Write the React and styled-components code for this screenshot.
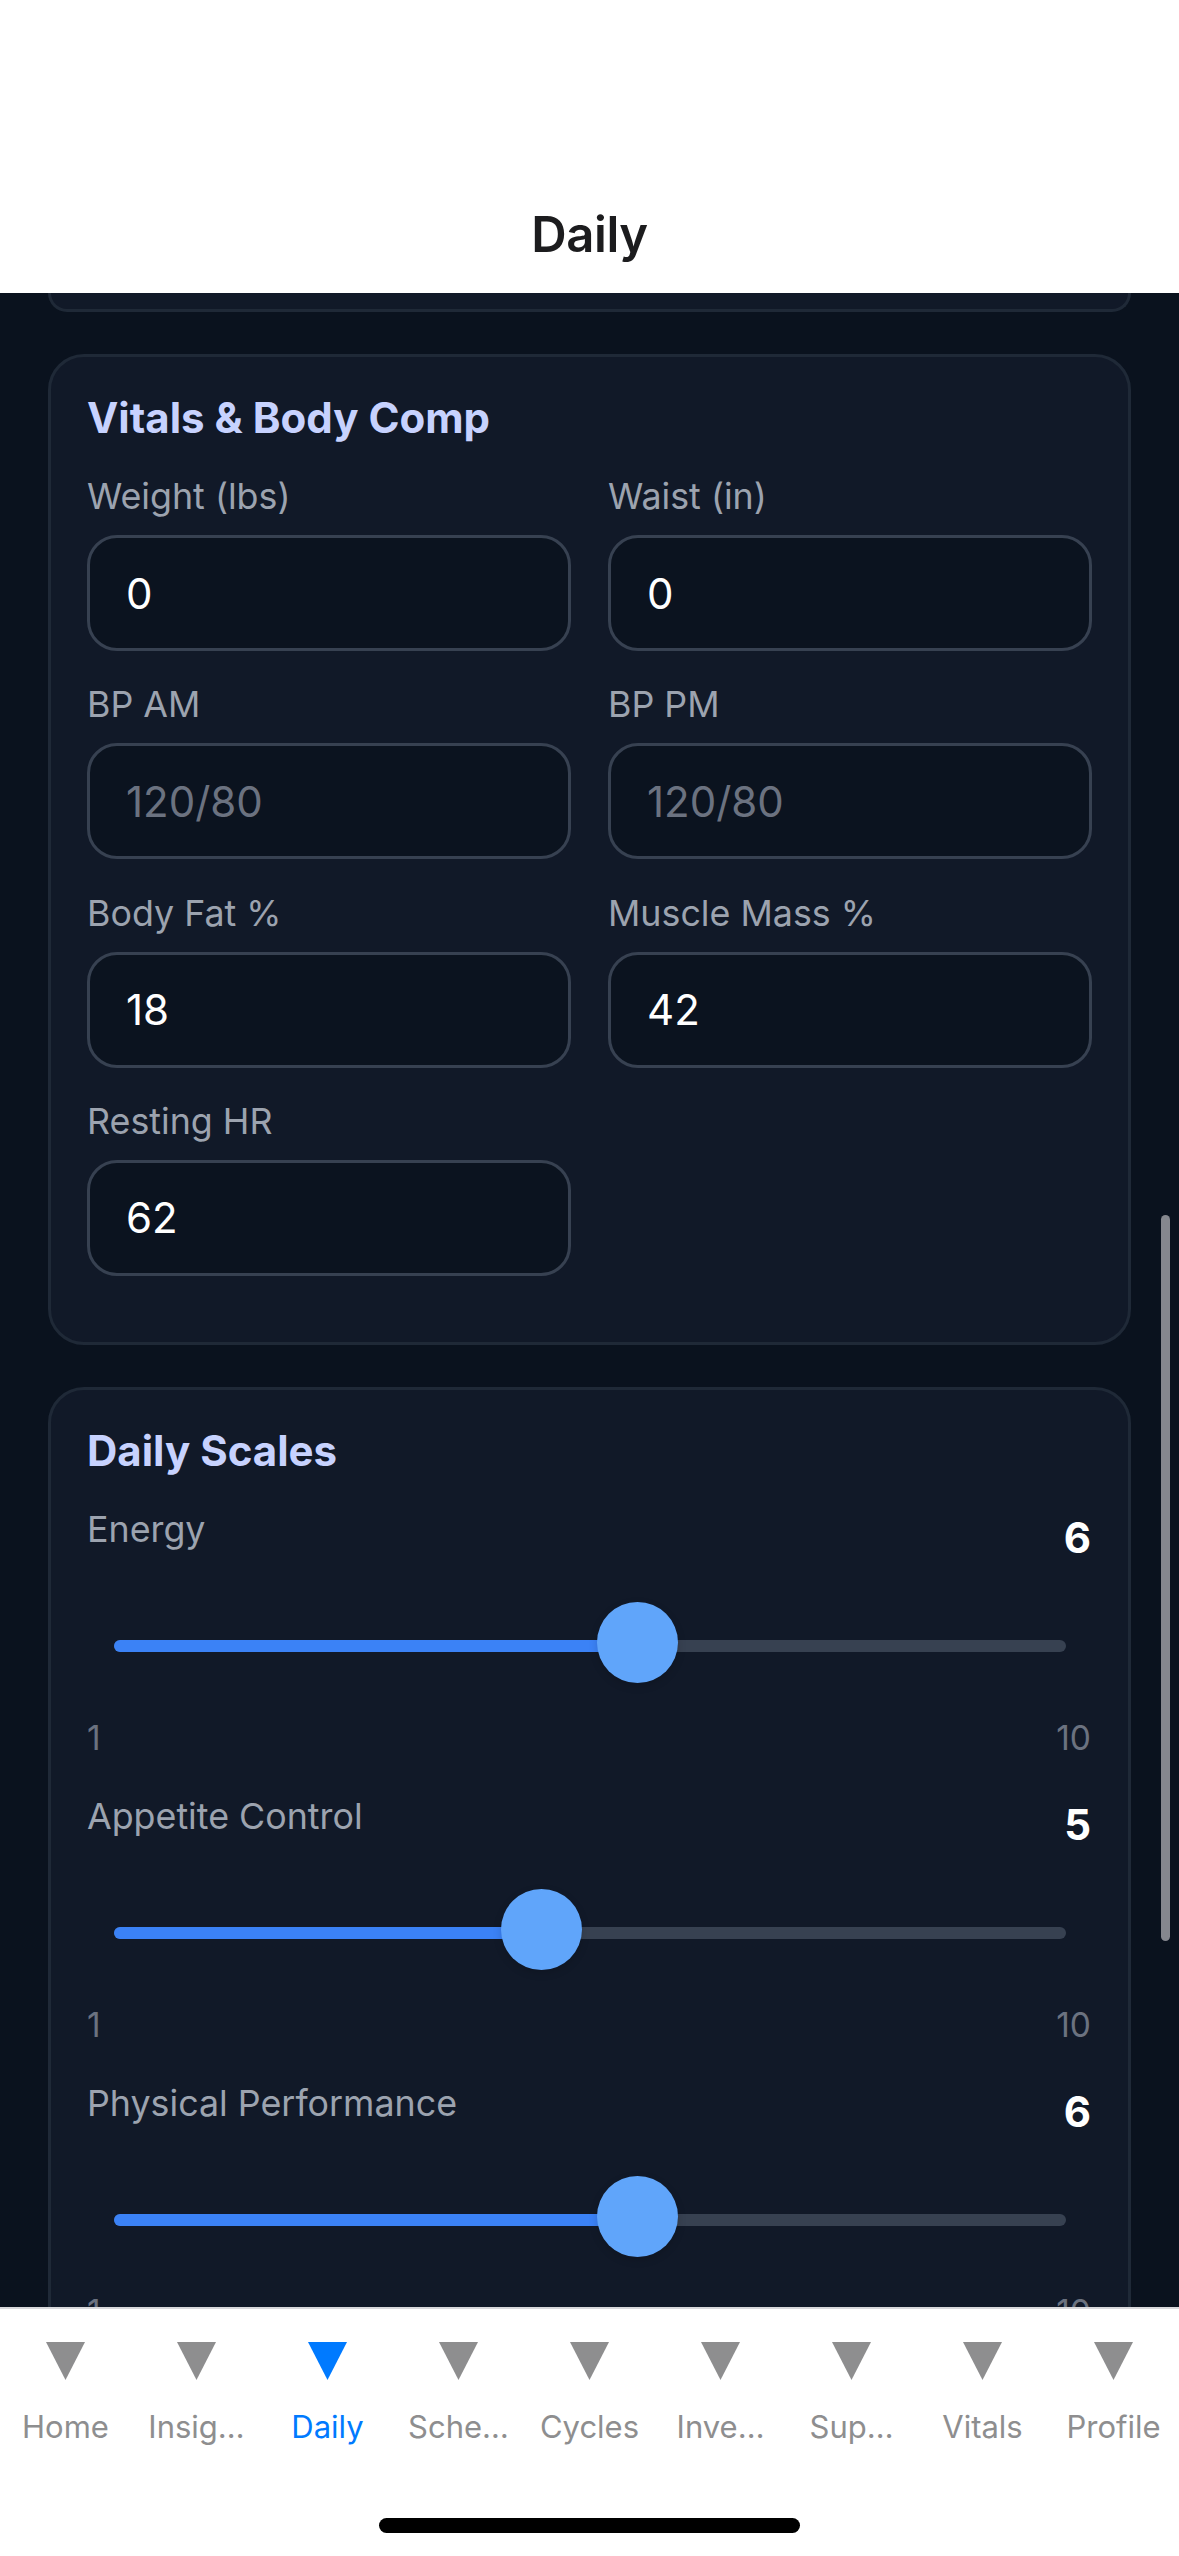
import React from "react";
import styled, { createGlobalStyle } from "styled-components";

const Global = createGlobalStyle`
  html, body { margin: 0; padding: 0; background: #fff; }
  * { box-sizing: border-box; }
  body { font-family: Inter, "Noto Sans", "Liberation Sans", sans-serif; }
`;

const Screen = styled.div`
  width: 1179px;
  height: 2556px;
  display: flex;
  flex-direction: column;
  overflow: hidden;
  position: relative;
`;

const Header = styled.header`
  flex: 0 0 293px;
  background: #fff;
  display: flex;
  align-items: flex-end;
  justify-content: center;
  padding-bottom: 28px;
`;

const HeaderTitle = styled.h1`
  margin: 0;
  font-size: 49px;
  line-height: 60px;
  font-weight: 600;
  letter-spacing: -0.4px;
  color: #1c1c1e;
`;

const Scroll = styled.main`
  flex: 1 1 0;
  min-height: 0;
  overflow: hidden;
  background: #0a121e;
  padding: 0 48px;
  display: flex;
  flex-direction: column;
  gap: 42px;
  position: relative;
`;

const CardStub = styled.div`
  flex: 0 0 19px;
  background: #111928;
  border: 3px solid #1f2937;
  border-top: none;
  border-radius: 0 0 36px 36px;
`;

const Card = styled.section`
  flex: 0 0 auto;
  background: #111928;
  border: 3px solid #1f2937;
  border-radius: 36px;
  padding: 34px 36px 66px;
`;

const CardTitle = styled.h2`
  margin: 0 0 29px;
  font-size: 42px;
  line-height: 54px;
  font-weight: 700;
  color: #c7d2fe;
`;

const FieldGrid = styled.div`
  display: grid;
  grid-template-columns: 1fr 1fr;
  column-gap: 37px;
  row-gap: 31.33px;
`;

const Field = styled.label`
  display: flex;
  flex-direction: column;
  gap: 17px;
`;

const FieldLabel = styled.span`
  font-size: 35.8px;
  line-height: 44px;
  font-weight: 400;
  color: #9ca3af;
`;

const Input = styled.input`
  width: 100%;
  height: 116px;
  padding: 0 36px;
  background: #0b131f;
  border: 3px solid #374151;
  border-radius: 30px;
  color: #fff;
  font-family: inherit;
  font-size: 42px;
  outline: none;
  &::placeholder { color: #6b7280; opacity: 1; }
`;

const ScaleList = styled.div`
  display: flex;
  flex-direction: column;
`;

const Scale = styled.div`
  height: 287px;
  display: flex;
  flex-direction: column;
`;

const ScaleHead = styled.div`
  display: flex;
  justify-content: space-between;
  align-items: flex-start;
  height: 60px;
`;

const ScaleValue = styled.span`
  margin: 4px 1px 0 0;
  font-size: 42px;
  line-height: 54px;
  font-weight: 700;
  color: #fff;
`;

const SliderBox = styled.div`
  height: 82px;
  margin-top: 38px;
  padding: 0 26px 0 27px;
  display: flex;
  align-items: center;
`;

const Track = styled.div`
  flex: 1;
  height: 12px;
  border-radius: 6px;
  background: #374151;
  position: relative;
`;

const Fill = styled.div`
  height: 100%;
  border-radius: 6px;
  background: #3b82f6;
`;

const Thumb = styled.div`
  position: absolute;
  top: 50%;
  width: 81px;
  height: 81px;
  margin: -44px 0 0 -40.5px;
  border-radius: 50%;
  background: #60a5fa;
  box-shadow: 0 3px 9px rgba(0, 0, 0, 0.15);
`;

const Range = styled.div`
  display: flex;
  justify-content: space-between;
  margin-top: 31px;
  padding-right: 1px;
  font-size: 33.5px;
  line-height: 40px;
  color: #6b7280;
`;

const ScrollThumb = styled.div`
  position: absolute;
  right: 9px;
  top: 922px;
  width: 9px;
  height: 726px;
  border-radius: 5px;
  background: #85878e;
`;

const TabBar = styled.nav`
  flex: 0 0 249px;
  background: #fff;
  border-top: 2px solid #d9d9dc;
  display: flex;
  flex-direction: column;
  align-items: center;
`;

const Tabs = styled.div`
  width: 100%;
  display: grid;
  grid-template-columns: repeat(9, 1fr);
  padding-top: 33px;
`;

const Tab = styled.div`
  display: flex;
  flex-direction: column;
  align-items: center;
  gap: 29px;
  color: ${p => (p.$active ? "#007aff" : "#8e8e8f")};
`;

const TabLabel = styled.span`
  font-size: 31px;
  line-height: 36px;
  font-weight: 400;
  white-space: nowrap;
`;

const HomeBar = styled.div`
  width: 421px;
  height: 15px;
  margin-top: auto;
  margin-bottom: 23px;
  border-radius: 8px;
  background: #000;
`;

const Tri = () => (
  <svg width="39" height="38" viewBox="0 0 39 38" aria-hidden="true">
    <path d="M0 0H39L19.5 38Z" fill="currentColor" />
  </svg>
);

const vitals = [
  ["Weight (lbs)", "0", ""],
  ["Waist (in)", "0", ""],
  ["BP AM", "", "120/80"],
  ["BP PM", "", "120/80"],
  ["Body Fat %", "18", ""],
  ["Muscle Mass %", "42", ""],
  ["Resting HR", "62", ""],
];

const scales = [
  ["Energy", 6],
  ["Appetite Control", 5],
  ["Physical Performance", 6],
];

const tabs = ["Home", "Insig…", "Daily", "Sche…", "Cycles", "Inve…", "Sup…", "Vitals", "Profile"];

export default function App() {
  return (
    <Screen>
      <Global />
      <Header>
        <HeaderTitle>Daily</HeaderTitle>
      </Header>
      <Scroll>
        <CardStub />
        <Card>
          <CardTitle>Vitals &amp; Body Comp</CardTitle>
          <FieldGrid>
            {vitals.map(([label, value, placeholder]) => (
              <Field key={label}>
                <FieldLabel>{label}</FieldLabel>
                <Input readOnly value={value} placeholder={placeholder} />
              </Field>
            ))}
          </FieldGrid>
        </Card>
        <Card>
          <CardTitle>Daily Scales</CardTitle>
          <ScaleList>
            {scales.map(([label, value]) => {
              const ratio = (value - 1) / 9;
              const at = `calc(40px + (100% - 81px) * ${ratio})`;
              return (
                <Scale key={label}>
                  <ScaleHead>
                    <FieldLabel>{label}</FieldLabel>
                    <ScaleValue>{value}</ScaleValue>
                  </ScaleHead>
                  <SliderBox>
                    <Track>
                      <Fill style={{ width: at }} />
                      <Thumb style={{ left: at }} />
                    </Track>
                  </SliderBox>
                  <Range>
                    <span>1</span>
                    <span>10</span>
                  </Range>
                </Scale>
              );
            })}
          </ScaleList>
        </Card>
        <ScrollThumb />
      </Scroll>
      <TabBar>
        <Tabs>
          {tabs.map((t, i) => (
            <Tab key={t} $active={i === 2}>
              <Tri />
              <TabLabel>{t}</TabLabel>
            </Tab>
          ))}
        </Tabs>
        <HomeBar />
      </TabBar>
    </Screen>
  );
}
